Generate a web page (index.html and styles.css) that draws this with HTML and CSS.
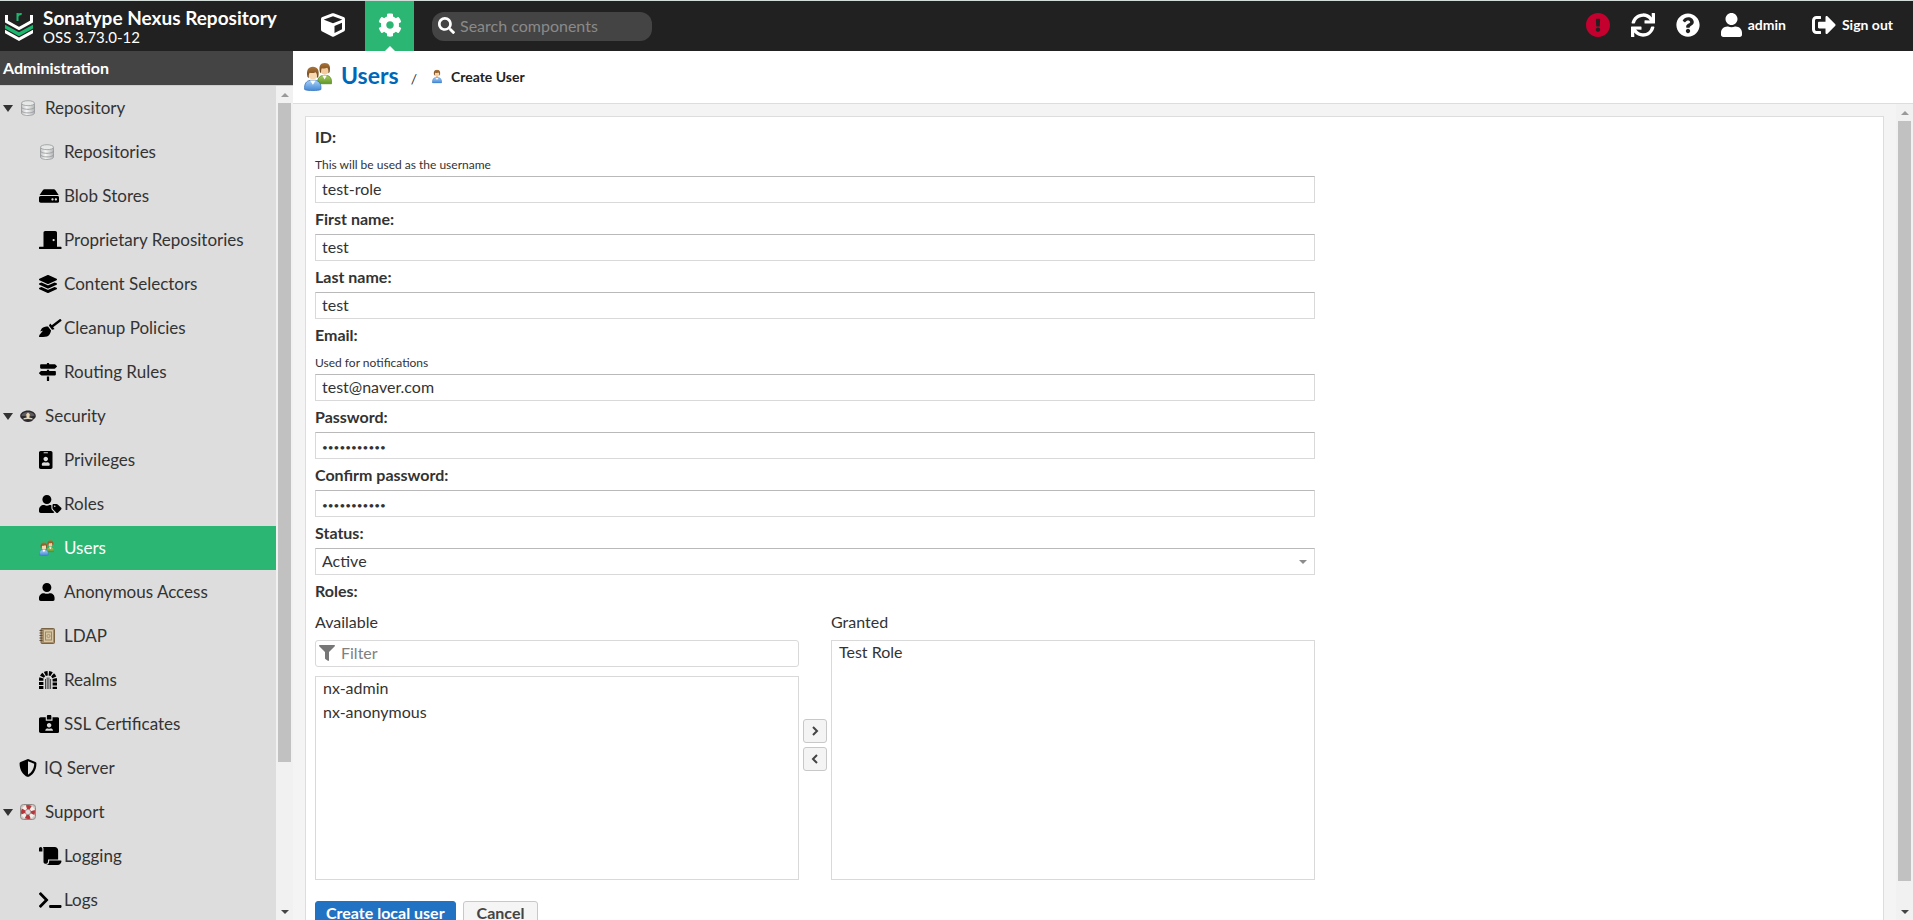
FILE: index.html
```
<!DOCTYPE html>
<html lang="en">
<head>
<meta charset="utf-8" />
<title>Users - Sonatype Nexus Repository</title>
<link rel="stylesheet" href="styles.css">
</head>
<body>
<!-- shared icons -->
<svg class="defs">
	<defs>
		<linearGradient id="g_blue" x1="0" y1="0" x2="0" y2="1"><stop offset="0" stop-color="#a9d0f7"/><stop offset="1" stop-color="#4287d6"/></linearGradient>
		<linearGradient id="g_green" x1="0" y1="0" x2="0" y2="1"><stop offset="0" stop-color="#a8cc60"/><stop offset="1" stop-color="#5f9628"/></linearGradient>
		<linearGradient id="g_hair" x1="0" y1="0" x2="0" y2="1"><stop offset="0" stop-color="#a9743a"/><stop offset="1" stop-color="#6d4216"/></linearGradient>
		<linearGradient id="g_metal" x1="0" y1="0" x2="1" y2="0"><stop offset="0" stop-color="#c2c4c5"/><stop offset=".4" stop-color="#f6f6f6"/><stop offset="1" stop-color="#b4b6b8"/></linearGradient>
	</defs>
	<symbol id="i_user" viewBox="0 0 448 512"><path d="M224 256c70.7 0 128-57.3 128-128S294.7 0 224 0 96 57.3 96 128s57.3 128 128 128zm89.6 32h-16.7c-22.2 10.2-46.9 16-72.9 16s-50.6-5.8-72.9-16h-16.7C60.2 288 0 348.2 0 422.4V464c0 26.5 21.5 48 48 48h352c26.5 0 48-21.5 48-48v-41.6c0-74.2-60.2-134.4-134.4-134.4z"/></symbol>
	<symbol id="i_db" viewBox="0 0 16 16">
		<path d="M1.500 3.200v9.800c0 1.500 2.900 2.500 6.500 2.500s6.500-1 6.500-2.500V3.200z" fill="url(#g_metal)" stroke="#96999b" stroke-width=".8"/>
		<ellipse cx="8" cy="3.200" rx="6.500" ry="2.500" fill="#e6e7e7" stroke="#96999b" stroke-width=".8"/>
		<path d="M1.500 7c0 1.300 2.900 2.300 6.500 2.300s6.500-1 6.500-2.300M1.500 10.600c0 1.300 2.900 2.300 6.500 2.300s6.500-1 6.500-2.300" fill="none" stroke="#96999b" stroke-width=".9"/>
	</symbol>
	<symbol id="i_person" viewBox="0 0 20 28">
		<path d="M1 27c-.8-6.500 2-10.500 6-11h6c4 .5 6.800 4.500 6 11z" fill="url(#g_blue)" stroke="#3474bd"/>
		<path d="M7 16l3 5 3-5z" fill="#fff"/>
		<rect x="8" y="12" width="4" height="5" fill="#d9a878"/>
		<ellipse cx="10" cy="8.500" rx="5" ry="6" fill="#f6d2a8"/>
		<path d="M4 11C2.500 4 5 .5 10 .5S17.500 4 16 11l-1.500 1c.6-3 0-5-1.500-6-2 1-4 1-6.500.6C5.500 8 5.300 10 5.600 12z" fill="url(#g_hair)"/>
	</symbol>
	<symbol id="i_users" viewBox="0 0 29 30">
		<path d="M14 22c-.4-5 2-8 5-8.500h5c3.400.5 5 4 4.500 8.500z" fill="url(#g_green)" stroke="#557f22" stroke-width=".7"/>
		<path d="M19 13.500l2.300 4 2.300-4z" fill="#fff"/>
		<ellipse cx="21.500" cy="7.500" rx="4.200" ry="5.200" fill="#f3cb9d"/>
		<path d="M16.500 10C15 3.500 17 .5 21.500 .5S28 3.500 26.500 10l-1.400 1c.5-3 0-4.500-1.200-5.500-1.800.9-3.600.9-5.400.5-.8 1.500-1 3-.7 5z" fill="url(#g_hair)"/>
		<path d="M.7 28c-.7-6 1.800-9 5.600-9.500h5.600c3.900.5 6.200 3.500 5.600 9.500-3 1.500-13.800 1.500-16.800 0z" fill="url(#g_blue)" stroke="#3474bd" stroke-width=".8"/>
		<path d="M6.300 18.500l2.900 4.500 2.900-4.500z" fill="#fff"/>
		<ellipse cx="9.200" cy="12" rx="4.800" ry="5.600" fill="#f8d8b0"/>
		<path d="M3.600 15C2 8 4.500 4.500 9.200 4.500S16.400 8 14.800 15l-1.500 1c.5-3 0-5-1.300-6-2 1-4 1-6.100.6-.9 1.400-1.200 3-.8 5.400z" fill="url(#g_hair)"/>
	</symbol>
</svg>

<header class="topbar">
	<div class="brand">
		<svg class="brand_logo" viewBox="0 0 28 29">
			<path d="M1.500 3v6.500L14 16.500l12.500-7V3" fill="none" stroke="#fff" stroke-width="3"/>
			<path d="M0 12.800L14 20.300l14-7.500v3.700l-14 7.800L0 16.500z" fill="#1cb66f"/>
			<path d="M0 17.800l14 7.600 14-7.600v3.500L14 29 0 21.300z" fill="#fff"/>
			<path d="M12.500 9V1M12.500 4.500c.5-2 2-2.800 4.200-2.500" fill="none" stroke="#1cb66f" stroke-width="2"/>
		</svg>
		<div>
			<div class="brand_name">Sonatype Nexus Repository</div>
			<div class="brand_ver">OSS 3.73.0-12</div>
		</div>
	</div>
	<div class="modes">
		<button type="button" class="mode" aria-label="Browse"><svg viewBox="0 0 512 512"><path d="M239.100 6.300l-208 78c-18.700 7-31.100 25-31.100 45v225.100c0 18.200 10.300 34.800 26.500 42.900l208 104c13.500 6.800 29.400 6.800 42.900 0l208-104c16.300-8.100 26.500-24.800 26.500-42.900V129.300c0-20-12.400-37.900-31.100-44.900l-208-78C262 2.200 250 2.200 239.100 6.300zM256 68.400l192 72v1.100l-192 78-192-78v-1.100l192-72zm32 356V275.500l160-65v133.900l-160 80z"/></svg></button>
		<button type="button" class="mode mode_on" aria-label="Administration"><svg viewBox="0 0 512 512"><path d="M487.400 315.700l-42.600-24.600c4.300-23.200 4.300-47 0-70.200l42.600-24.600c4.900-2.800 7.100-8.600 5.500-14-11.100-35.600-30-67.800-54.700-94.600-3.800-4.100-10-5.100-14.800-2.300L380.800 110c-17.900-15.400-38.500-27.300-60.800-35.100V25.800c0-5.600-3.900-10.500-9.400-11.700-36.700-8.200-74.300-7.800-109.200 0-5.500 1.200-9.400 6.100-9.400 11.700V75c-22.200 7.900-42.800 19.800-60.800 35.100L88.700 85.500c-4.900-2.800-11-1.900-14.800 2.300-24.700 26.700-43.600 58.900-54.700 94.600-1.700 5.400.6 11.200 5.500 14L67.300 221c-4.300 23.200-4.300 47 0 70.200l-42.600 24.600c-4.900 2.800-7.100 8.600-5.500 14 11.100 35.600 30 67.800 54.700 94.600 3.800 4.100 10 5.100 14.800 2.300l42.600-24.600c17.900 15.400 38.500 27.300 60.800 35.100v49.200c0 5.600 3.900 10.500 9.400 11.700 36.700 8.200 74.300 7.800 109.200 0 5.500-1.200 9.400-6.100 9.400-11.700v-49.200c22.200-7.900 42.800-19.800 60.800-35.100l42.600 24.600c4.900 2.800 11 1.900 14.800-2.300 24.700-26.700 43.600-58.900 54.700-94.600 1.500-5.500-.7-11.300-5.600-14.100zM256 336c-44.100 0-80-35.900-80-80s35.900-80 80-80 80 35.900 80 80-35.900 80-80 80z"/></svg></button>
	</div>
	<label class="search">
		<svg viewBox="0 0 512 512"><path d="M505 442.700L405.300 343c-4.500-4.500-10.600-7-17-7H372c27.600-35.300 44-79.700 44-128C416 93.100 322.900 0 208 0S0 93.100 0 208s93.100 208 208 208c48.300 0 92.700-16.400 128-44v16.300c0 6.400 2.500 12.500 7 17l99.700 99.700c9.400 9.400 24.600 9.400 33.900 0l28.300-28.300c9.400-9.400 9.400-24.600.1-34zM208 336c-70.700 0-128-57.200-128-128 0-70.700 57.200-128 128-128 70.700 0 128 57.200 128 128 0 70.700-57.200 128-128 128z"/></svg>
		<input type="text" placeholder="Search components" aria-label="Search components">
	</label>
	<div class="tools">
		<button type="button" class="tool tool_alert" aria-label="Status"><svg viewBox="8 8 496 496"><path d="M504 256c0 136.997-111.043 248-248 248S8 392.997 8 256C8 119.083 119.043 8 256 8s248 111.083 248 248zm-248 50c-25.405 0-46 20.595-46 46s20.595 46 46 46 46-20.595 46-46-20.595-46-46-46zm-43.673-165.346l7.418 136c.347 6.364 5.609 11.346 11.982 11.346h48.546c6.373 0 11.635-4.982 11.982-11.346l7.418-136c.375-6.874-5.098-12.654-11.982-12.654h-63.383c-6.884 0-12.356 5.780-11.981 12.654z"/></svg></button>
		<button type="button" class="tool" aria-label="Refresh"><svg viewBox="0 0 512 512"><path d="M440.650 12.570l4 82.770A247.160 247.160 0 0 0 255.830 8C134.730 8 33.910 94.920 12.290 209.820A12 12 0 0 0 24.090 224h49.050a12 12 0 0 0 11.670-9.260 175.910 175.910 0 0 1 317-56.940l-101.460-4.860a12 12 0 0 0-12.570 12v47.410a12 12 0 0 0 12 12H500a12 12 0 0 0 12-12V12a12 12 0 0 0-12-12h-47.370a12 12 0 0 0-11.980 12.570zM255.830 432a175.610 175.610 0 0 1-146-77.800l101.800 4.870a12 12 0 0 0 12.570-12v-47.400a12 12 0 0 0-12-12H12a12 12 0 0 0-12 12V500a12 12 0 0 0 12 12h47.350a12 12 0 0 0 12-12.600l-4.150-82.570A247.170 247.170 0 0 0 255.830 504c121.110 0 221.930-86.920 243.550-201.820a12 12 0 0 0-11.800-14.180h-49.050a12 12 0 0 0-11.670 9.260A175.860 175.860 0 0 1 255.830 432z"/></svg></button>
		<button type="button" class="tool" aria-label="Help"><svg viewBox="0 0 512 512"><path d="M504 256c0 136.997-111.043 248-248 248S8 392.997 8 256C8 119.083 119.043 8 256 8s248 111.083 248 248zM262.655 90c-54.497 0-89.255 22.957-116.549 63.758-3.536 5.286-2.353 12.415 2.715 16.258l34.699 26.310c5.205 3.947 12.621 3.008 16.665-2.122 17.864-22.658 30.113-35.797 57.303-35.797 20.429 0 45.698 13.148 45.698 32.958 0 14.976-12.363 22.667-32.534 33.976C247.128 238.528 216 254.941 216 296v4c0 6.627 5.373 12 12 12h56c6.627 0 12-5.373 12-12v-1.333c0-28.462 83.186-29.647 83.186-106.667 0-58.002-60.165-102-116.531-102zM256 338c-25.365 0-46 20.635-46 46 0 25.364 20.635 46 46 46s46-20.636 46-46c0-25.365-20.635-46-46-46z"/></svg></button>
		<button type="button" class="tool"><svg viewBox="0 0 448 512"><use href="#i_user"/></svg>admin</button>
		<button type="button" class="tool tool_out"><svg viewBox="0 0 512 512"><path d="M497 273L329 441c-15 15-41 4.500-41-17v-96H152c-13.300 0-24-10.700-24-24v-96c0-13.300 10.700-24 24-24h136V88c0-21.400 25.900-32 41-17l168 168c9.300 9.400 9.300 24.600 0 34zM192 436v-40c0-6.600-5.400-12-12-12H96c-17.700 0-32-14.300-32-32V160c0-17.700 14.300-32 32-32h84c6.600 0 12-5.400 12-12V76c0-6.600-5.400-12-12-12H96c-53 0-96 43-96 96v192c0 53 43 96 96 96h84c6.600 0 12-5.400 12-12z"/></svg>Sign out</button>
	</div>
</header>

<div class="wrap">
	<aside class="side">
		<h2 class="side_title">Administration</h2>
		<div class="side_body">
			<nav class="nav">
				<a href="#" class="group"><i class="ico"><svg viewBox="0 0 16 16"><use href="#i_db"/></svg></i>Repository</a>
				<a href="#"><i class="ico ico_s"><svg viewBox="0 0 16 16"><use href="#i_db"/></svg></i>Repositories</a>
				<a href="#"><i class="ico"><svg viewBox="0 0 576 512"><path d="M576 304v96c0 26.510-21.490 48-48 48H48c-26.510 0-48-21.490-48-48v-96c0-26.510 21.490-48 48-48h480c26.510 0 48 21.490 48 48zm-48-80a79.557 79.557 0 0 1 30.777 6.165L462.250 85.374A48.003 48.003 0 0 0 422.311 64H153.689a48 48 0 0 0-39.938 21.374L17.223 230.165A79.557 79.557 0 0 1 48 224h480zm-48 96c-17.673 0-32 14.327-32 32s14.327 32 32 32 32-14.327 32-32-14.327-32-32-32zm-96 0c-17.673 0-32 14.327-32 32s14.327 32 32 32 32-14.327 32-32-14.327-32-32-32z"/></svg></i>Blob Stores</a>
				<a href="#"><i class="ico"><svg viewBox="0 0 640 512"><path d="M624 448H512V50.800C512 22.780 490.470 0 464 0H175.990c-26.470 0-48 22.780-48 50.800V448H16c-8.840 0-16 7.160-16 16v32c0 8.840 7.160 16 16 16h608c8.840 0 16-7.160 16-16v-32c0-8.840-7.160-16-16-16zM415.990 288c-17.670 0-32-14.330-32-32s14.330-32 32-32 32 14.330 32 32c.01 17.670-14.320 32-32 32z"/></svg></i>Proprietary Repositories</a>
				<a href="#"><i class="ico"><svg viewBox="0 0 512 512"><path d="M12.410 148.020l232.940 105.670c6.800 3.090 14.490 3.090 21.290 0l232.940-105.670c16.550-7.510 16.550-32.520 0-40.030L266.650 2.310a25.607 25.607 0 0 0-21.290 0L12.410 107.980c-16.550 7.510-16.550 32.530 0 40.040zm487.180 88.280l-58.090-26.330-161.640 73.270c-7.560 3.430-15.590 5.170-23.860 5.170s-16.290-1.740-23.860-5.170L70.510 209.970l-58.100 26.330c-16.550 7.500-16.550 32.500 0 40l232.940 105.590c6.800 3.080 14.490 3.080 21.290 0L499.590 276.300c16.550-7.500 16.550-32.500 0-40zm0 127.800l-57.870-26.230-161.860 73.370c-7.560 3.430-15.590 5.170-23.860 5.170s-16.290-1.740-23.860-5.170L70.290 337.870 12.410 364.100c-16.550 7.500-16.550 32.500 0 40l232.940 105.590c6.800 3.080 14.490 3.080 21.290 0L499.590 404.100c16.550-7.500 16.550-32.500 0-40z"/></svg></i>Content Selectors</a>
				<a href="#"><i class="ico"><svg viewBox="0 0 640 512"><path d="M256.470 216.770l86.730 109.180s-16.600 102.360-76.570 150.120C206.660 523.850 0 510.190 0 510.190s3.800-23.140 11-55.430l94.620-112.170c3.970-4.700-.87-11.620-6.650-9.500l-60.400 22.090c14.440-41.660 32.720-80.040 54.600-97.470 59.970-47.760 163.300-40.940 163.300-40.940zM636.530 31.030l-19.860-25c-5.490-6.900-15.520-8.050-22.410-2.560l-232.480 177.800-34.140-42.970c-5.090-6.410-15.140-5.210-18.590 2.210l-25.330 54.550 86.730 109.180 58.800-12.450c8-1.690 11.420-11.200 6.340-17.600l-34.090-42.920 232.480-177.800c6.890-5.480 8.040-15.530 2.550-22.440z"/></svg></i>Cleanup Policies</a>
				<a href="#"><i class="ico"><svg viewBox="0 0 512 512"><path d="M507.310 84.690L464 41.370c-6-6-14.140-9.370-22.630-9.370H288V16c0-8.840-7.160-16-16-16h-32c-8.840 0-16 7.160-16 16v16H56c-13.250 0-24 10.750-24 24v80c0 13.250 10.750 24 24 24h385.370c8.490 0 16.620-3.370 22.630-9.370l43.310-43.310c6.250-6.260 6.250-16.380 0-22.630zM224 496c0 8.840 7.160 16 16 16h32c8.840 0 16-7.160 16-16V384h-64v112zm232-272H288v-32h-64v32H70.630c-8.490 0-16.620 3.370-22.630 9.370L4.690 276.690c-6.250 6.250-6.250 16.380 0 22.630L48 342.630c6 6 14.140 9.370 22.630 9.370H456c13.250 0 24-10.750 24-24v-80c0-13.250-10.750-24-24-24z"/></svg></i>Routing Rules</a>
				<a href="#" class="group"><i class="ico"><svg viewBox="0 0 16 16">
					<path d="M.2 8c0-2.900 3.500-5.400 7.800-5.400s7.800 2.500 7.800 5.400c0 1.300-.8 2.200-2 3-1 2-3 2.900-5.800 2.900S3.200 13 2.200 11C1 10.200.2 9.300.2 8z" fill="#2c2a2c"/>
					<path d="M1.200 7.600c1-2.200 3.600-3.600 6.800-3.600s5.800 1.400 6.800 3.600c-2 .6-4 .8-6.800.8s-4.800-.2-6.800-.8z" fill="#5f5b5e"/>
					<path d="M3.500 10.200c2.500-1 6.500-1 9 0v1.200c-2.500-.7-6.500-.7-9 0z" fill="#d9d3c8"/>
					<path d="M8 4.600l1.800 1.600-.5 4H6.700l-.5-4z" fill="#e9d9b2"/>
				</svg></i>Security</a>
				<a href="#"><i class="ico"><svg viewBox="0 0 384 512"><path d="M336 0H48C21.500 0 0 21.500 0 48v416c0 26.500 21.500 48 48 48h288c26.500 0 48-21.500 48-48V48c0-26.500-21.500-48-48-48zM144 32h96c8.800 0 16 7.200 16 16s-7.200 16-16 16h-96c-8.800 0-16-7.200-16-16s7.200-16 16-16zm48 128c35.300 0 64 28.700 64 64s-28.700 64-64 64-64-28.700-64-64 28.700-64 64-64zm112 236.800c0 10.600-10 19.200-22.400 19.200H102.400C90 416 80 407.400 80 396.800v-19.200c0-31.800 30.100-57.600 67.200-57.600h5c12.300 5.100 25.700 8 39.800 8s27.600-2.900 39.800-8h5c37.100 0 67.200 25.800 67.200 57.600v19.200z"/></svg></i>Privileges</a>
				<a href="#"><i class="ico"><svg viewBox="0 0 640 512"><path d="M630.600 364.900l-90.300-90.200c-12-12-28.300-18.700-45.300-18.700h-79.300c-17.700 0-32 14.300-32 32v79.200c0 17 6.700 33.200 18.700 45.200l90.300 90.200c12.500 12.500 32.800 12.500 45.300 0l92.500-92.500c12.600-12.500 12.600-32.700.1-45.200zm-182.800-21c-13.300 0-24-10.700-24-24s10.700-24 24-24 24 10.700 24 24c0 13.200-10.700 24-24 24zm-223.800-88c70.700 0 128-57.300 128-128C352 57.300 294.700 0 224 0S96 57.300 96 128c0 70.600 57.300 127.900 128 127.900zm127.800 111.200V294c-12.200-3.600-24.900-6.200-38.200-6.200h-16.700c-22.200 10.200-46.900 16-72.900 16s-50.600-5.800-72.900-16h-16.700c-74.200 0-134.400 60.200-134.400 134.400v41.600c0 26.500 21.500 48 48 48h352c15.500 0 29.100-7.500 37.900-18.900l-58-58c-18.100-18.100-28.100-42.200-28.100-67.800z"/></svg></i>Roles</a>
				<a href="#" class="current"><i class="ico ico_s"><svg viewBox="0 0 29 30"><use href="#i_users"/></svg></i>Users</a>
				<a href="#"><i class="ico"><svg viewBox="0 0 448 512"><use href="#i_user"/></svg></i>Anonymous Access</a>
				<a href="#"><i class="ico ico_s"><svg viewBox="0 0 16 16">
					<rect x="2" y=".5" width="13.500" height="15" rx="1" fill="#a98d68" stroke="#7a6244"/>
					<rect x="5" y="2" width="9" height="12" fill="#d8c7a6"/>
					<rect x="6.500" y="4" width="6" height="8" fill="none" stroke="#a08760"/>
					<circle cx="9.500" cy="8" r="1.600" fill="none" stroke="#a08760" stroke-width=".8"/>
					<path d="M.5 2.500h3M.5 5h3M.5 7.500h3M.5 10h3M.5 12.500h3" stroke="#5f4c34"/>
				</svg></i>LDAP</a>
				<a href="#"><i class="ico"><svg viewBox="0 0 18 18">
					<path d="M2.200 18V9a6.800 6.800 0 0 1 13.600 0v9" fill="none" stroke="#000" stroke-width="4.400" stroke-dasharray="2.900 1.200"/>
					<path d="M6.500 18V8M8.200 18V6.500M9.900 18V6.500M11.600 18V8" stroke="#333" stroke-width=".9"/>
				</svg></i>Realms</a>
				<a href="#"><i class="ico"><svg viewBox="0 0 576 512"><path d="M528 64H384v96H192V64H48C21.500 64 0 85.500 0 112v352c0 26.500 21.500 48 48 48h480c26.500 0 48-21.500 48-48V112c0-26.500-21.500-48-48-48zM288 224c35.300 0 64 28.700 64 64s-28.700 64-64 64-64-28.700-64-64 28.700-64 64-64zm93.300 224H194.700c-10.400 0-18.800-10-15.600-19.800 8.300-25.600 32.400-44.200 60.900-44.200h8.200c12.300 5.100 25.700 8 39.800 8s27.600-2.900 39.800-8h8.200c28.400 0 52.500 18.500 60.900 44.200 3.200 9.900-5.200 19.800-15.600 19.800zM352 32c0-17.700-14.300-32-32-32h-64c-17.700 0-32 14.300-32 32v96h128V32z"/></svg></i>SSL Certificates</a>
				<a href="#" class="single"><i class="ico"><svg viewBox="0 0 512 512"><path d="M466.500 83.700l-192-80a48.150 48.150 0 0 0-36.900 0l-192 80C27.700 91.100 16 108.600 16 128c0 198.500 114.500 335.700 221.500 380.300 11.800 4.900 25.100 4.900 36.900 0C360.100 472.600 496 349.300 496 128c0-19.400-11.700-36.900-29.500-44.300zM256.100 446.300l-.1-381 175.900 73.300c-3.300 151.400-82.100 261.100-175.800 307.700z"/></svg></i>IQ Server</a>
				<a href="#" class="group"><i class="ico"><svg viewBox="0 0 16 16">
					<rect x=".5" y=".5" width="15" height="15" rx="3" fill="#cfcac6" stroke="#8f8a86"/>
					<circle cx="8" cy="8" r="5" fill="none" stroke="#f4efec" stroke-width="4"/>
					<circle cx="8" cy="8" r="5" fill="none" stroke="#b5373b" stroke-width="4" stroke-dasharray="4.400 3.454" stroke-dashoffset="2.200"/>
					<circle cx="8" cy="8" r="2.800" fill="#ddd" stroke="#8f5a58" stroke-width=".6"/>
				</svg></i>Support</a>
				<a href="#"><i class="ico"><svg viewBox="0 0 640 512"><path d="M48 0C21.530 0 0 21.530 0 48v64c0 8.840 7.160 16 16 16h80V48C96 21.530 74.470 0 48 0zm208 412.570V352h288V96c0-52.940-43.060-96-96-96H111.590C121.740 13.410 128 29.920 128 48v368c0 38.870 34.650 69.650 74.750 63.120C234.220 474 256 444.460 256 412.570zM288 384v32c0 52.930-43.060 96-96 96h336c61.860 0 112-50.140 112-112 0-8.840-7.160-16-16-16H288z"/></svg></i>Logging</a>
				<a href="#"><i class="ico"><svg viewBox="0 0 640 512"><path d="M257.981 272.971L63.638 467.314c-9.373 9.373-24.569 9.373-33.941 0L7.029 444.647c-9.357-9.357-9.375-24.522-.04-33.901L161.011 256 6.990 101.255c-9.335-9.379-9.317-24.544.04-33.901l22.667-22.667c9.373-9.373 24.569-9.373 33.941 0L257.981 239.030c9.373 9.372 9.373 24.568 0 33.941zM640 456v-32c0-13.255-10.745-24-24-24H312c-13.255 0-24 10.745-24 24v32c0 13.255 10.745 24 24 24h304c13.255 0 24-10.745 24-24z"/></svg></i>Logs</a>
			</nav>
			<div class="scroll"><i class="up"></i><div class="track"><div class="thumb" style="height:82.4%"></div></div><i class="down"></i></div>
		</div>
	</aside>

	<main class="main">
		<div class="crumbs">
			<svg class="crumb_ico" viewBox="0 0 29 30"><use href="#i_users"/></svg>
			<div class="crumb_txt">
				<a href="#" class="crumb_root">Users</a>
				<span class="crumb_sep">/</span>
				<span class="crumb_cur"><svg viewBox="0 0 20 28"><use href="#i_person"/></svg>Create User</span>
			</div>
		</div>
		<div class="content">
			<div class="panel">
				<form class="form">
					<label class="lbl" for="userId">ID:</label>
					<p class="hint">This will be used as the username</p>
					<input class="txt" type="text" id="userId" value="test-role">
					<label class="lbl" for="firstName">First name:</label>
					<input class="txt" type="text" id="firstName" value="test">
					<label class="lbl" for="lastName">Last name:</label>
					<input class="txt" type="text" id="lastName" value="test">
					<label class="lbl" for="email">Email:</label>
					<p class="hint">Used for notifications</p>
					<input class="txt" type="text" id="email" value="test@naver.com">
					<label class="lbl" for="password">Password:</label>
					<input class="txt pwd" type="password" id="password" value="testpasswor">
					<label class="lbl" for="confirm">Confirm password:</label>
					<input class="txt pwd" type="password" id="confirm" value="testpasswor">
					<label class="lbl" for="status">Status:</label>
					<div class="combo">
						<select class="txt" id="status"><option>Active</option><option>Disabled</option></select>
					</div>
					<div class="lbl">Roles:</div>
					<div class="roles">
						<div class="role_col">
							<label class="role_lbl" for="available">Available</label>
							<div class="filter">
								<svg viewBox="0 0 512 512"><path d="M487.976 0H24.028C2.710 0-8.047 25.866 7.058 40.971L192 225.941V432c0 7.831 3.821 15.170 10.237 19.662l80 55.980C298.020 518.690 320 507.493 320 487.980V225.941l184.947-184.970C520.021 25.896 509.338 0 487.976 0z"/></svg>
								<input type="text" placeholder="Filter" aria-label="Filter">
							</div>
							<select multiple class="list" id="available">
								<option>nx-admin</option>
								<option>nx-anonymous</option>
							</select>
						</div>
						<div class="movers">
							<button type="button" aria-label="Add"><svg viewBox="0 0 10 12"><path d="M3 2l4 4-4 4"/></svg></button>
							<button type="button" aria-label="Remove"><svg viewBox="0 0 10 12"><path d="M7 2L3 6l4 4"/></svg></button>
						</div>
						<div class="role_col">
							<label class="role_lbl" for="granted">Granted</label>
							<select multiple class="list" id="granted">
								<option>Test Role</option>
							</select>
						</div>
					</div>
					<div class="actions">
						<button type="button" class="btn btn_main">Create local user</button>
						<button type="button" class="btn">Cancel</button>
					</div>
				</form>
			</div>
			<div class="scroll"><i class="up"></i><div class="track"><div class="thumb" style="height:97.2%"></div></div><i class="down"></i></div>
		</div>
	</main>
</div>
</body>
</html>
```
FILE: styles.css
```
*{box-sizing:border-box;}
body{margin:0;height:100vh;display:flex;flex-direction:column;overflow:hidden;font:16px/20px Lato,"Open Sans",sans-serif;color:#333;background:#fff;}
button,input,select{margin:0;font:inherit;color:inherit;}
button{padding:0;border:0;background:none;cursor:pointer;}
input:focus,select:focus{outline:none;}
a{color:inherit;text-decoration:none;}
svg{display:block;fill:currentColor;}
.defs{width:0;height:0;position:absolute;}

/* top bar */
.topbar{flex:none;display:flex;height:51px;border-top:1px solid #d3dcd8;background:#212121;color:#fff;}
.brand{flex:none;width:293px;padding:6px 0 0 5px;display:flex;gap:10px;}
.brand_logo{width:28px;height:29px;margin-top:5px;}
.brand_name{font-size:19px;line-height:22px;font-weight:bold;white-space:nowrap;}
.brand_ver{font-size:15px;line-height:16px;}
.modes{display:flex;gap:8px;margin-left:15px;}
.mode{position:relative;width:49px;display:flex;align-items:center;justify-content:center;padding-bottom:2px;}
.mode svg{width:24px;height:24px;}
.mode_on{background:#2bb673;}
.mode_on:after{content:"";position:absolute;left:50%;bottom:0;margin-left:-5px;border:5px solid transparent;border-top:0;border-bottom-color:#fff;}
.search{display:flex;align-items:center;gap:5px;width:220px;height:29px;margin:11px 0 0 18px;padding:0 0 2px 6px;border-radius:12px;background:#444;}
.search svg{flex:none;width:17px;height:17px;}
.search input{flex:1;min-width:0;padding:0;border:0;background:none;color:#fff;}
.search input::placeholder{color:#8a8a8a;}
.tools{display:flex;align-items:center;gap:21px;margin-left:auto;padding:0 20px 2px 0;}
.tool{display:flex;align-items:center;gap:6px;font-size:14px;font-weight:bold;}
.tool svg{height:24px;}
.tool_alert{color:#c4002f;}
.tool_out{margin-left:5px;}

.wrap{flex:1;min-height:0;display:flex;}

/* side menu */
.side{flex:none;width:293px;display:flex;flex-direction:column;}
.side_title{flex:none;margin:0;padding:0 3px;font-size:16px;line-height:34px;background:#444;color:#fff;}
.side_body{flex:1;min-height:0;display:flex;border-top:1px solid #ccc;}
.nav{flex:1;overflow:hidden;background:#ddd;}
.nav a{display:flex;align-items:center;height:44px;padding-left:39px;font-size:17px;white-space:nowrap;color:#333;}
.nav .group{padding-left:3px;}
.nav .group:before{content:"";width:0;margin-right:7px;border:solid transparent;border-width:7px 5px 0;border-top-color:#333;}
.nav .single{padding-left:19px;}
.nav .current{background:#2bb673;color:#fff;}
.ico{flex:none;width:25px;color:#000;}
.ico svg{height:18px;}
.ico_s svg,.group .ico svg{height:16px;}

/* scroll bars */
.scroll{flex:none;width:17px;display:flex;flex-direction:column;background:#f1f1f1;}
.scroll i{display:flex;align-items:center;justify-content:center;height:17px;}
.scroll .up:before{content:"";border:4px solid transparent;border-top:0;border-bottom-color:#999;}
.scroll .down:before{content:"";border:4px solid transparent;border-bottom:0;border-top-color:#444;}
.track{flex:1;padding:0 2px;}
.thumb{background:#c1c1c1;}

/* main */
.main{flex:1;min-width:0;display:flex;flex-direction:column;}
.crumbs{flex:none;display:flex;align-items:center;gap:9px;height:53px;padding-left:11px;border-bottom:1px solid #ddd;}
.crumb_ico{width:28px;height:30px;}
.crumb_txt{display:flex;align-items:baseline;font-size:14px;}
.crumb_root{font-size:23px;font-weight:bold;color:#0067b8;}
.crumb_sep{margin:0 15px 0 12px;}
.crumb_cur{display:flex;align-items:center;gap:9px;font-weight:bold;color:#222;}
.crumb_cur svg{width:10px;height:15px;}
.content{flex:1;min-height:0;display:flex;background:#f4f4f4;overflow:hidden;}
.panel{flex:1;align-self:flex-start;min-height:100vh;margin:12px 12px 0;padding:4px 9px 24px;border:1px solid #ddd;background:#fff;}
.form{max-width:1000px;}
.lbl{display:block;padding:5px 0 4px;line-height:22px;font-weight:bold;}
.hint{margin:0;padding:3px 0 1px;font-size:12px;line-height:20px;}
.txt{display:block;width:100%;height:27px;padding:0 6px 2px;border:1px solid #d9d9d9;border-top-color:#b9b9b9;border-radius:0;background:#fff;}
.pwd{padding:2px 6px 0;font-size:10px;}
.combo{position:relative;}
.combo select{appearance:none;-webkit-appearance:none;}
.combo:after{content:"";position:absolute;right:8px;top:12px;border:solid transparent;border-width:4px 4px 0;border-top-color:#8c8c8c;pointer-events:none;}
.roles{display:flex;}
.role_col{flex:1;display:flex;flex-direction:column;}
.role_lbl{padding-bottom:2px;line-height:32px;}
.filter{display:flex;align-items:center;gap:6px;height:27px;margin-bottom:9px;padding:0 0 1px 3px;border:1px solid #d9d9d9;border-radius:3px;}
.filter svg{flex:none;width:16px;height:16px;color:#777;}
.filter input{flex:1;min-width:0;padding:0;border:0;background:none;}
.filter input::placeholder{color:#808080;}
.list{flex:1;width:100%;min-height:204px;padding:1px 0 0;border:1px solid #d9d9d9;border-radius:0;background:#fff;}
.list option{padding:0 7px;line-height:24px;min-height:24px;}
.movers{display:flex;flex-direction:column;justify-content:center;gap:4px;padding:4px 4px 0;}
.movers button{display:flex;align-items:center;justify-content:center;width:24px;height:24px;border:1px solid #c8c8c8;border-radius:3px;background:#f4f4f4;color:#444;}
.movers svg{width:10px;height:12px;fill:none;stroke:currentColor;stroke-width:2;}
.actions{display:flex;gap:7px;margin-top:21px;}
.btn{height:24px;padding:0 13px;border:1px solid #c8c8c8;border-radius:3px;background:#f5f5f5;font-weight:bold;line-height:16px;color:#444;}
.btn_main{padding:0 10px;border-color:#2272c3;background:#2272c3;color:#fff;}
```
